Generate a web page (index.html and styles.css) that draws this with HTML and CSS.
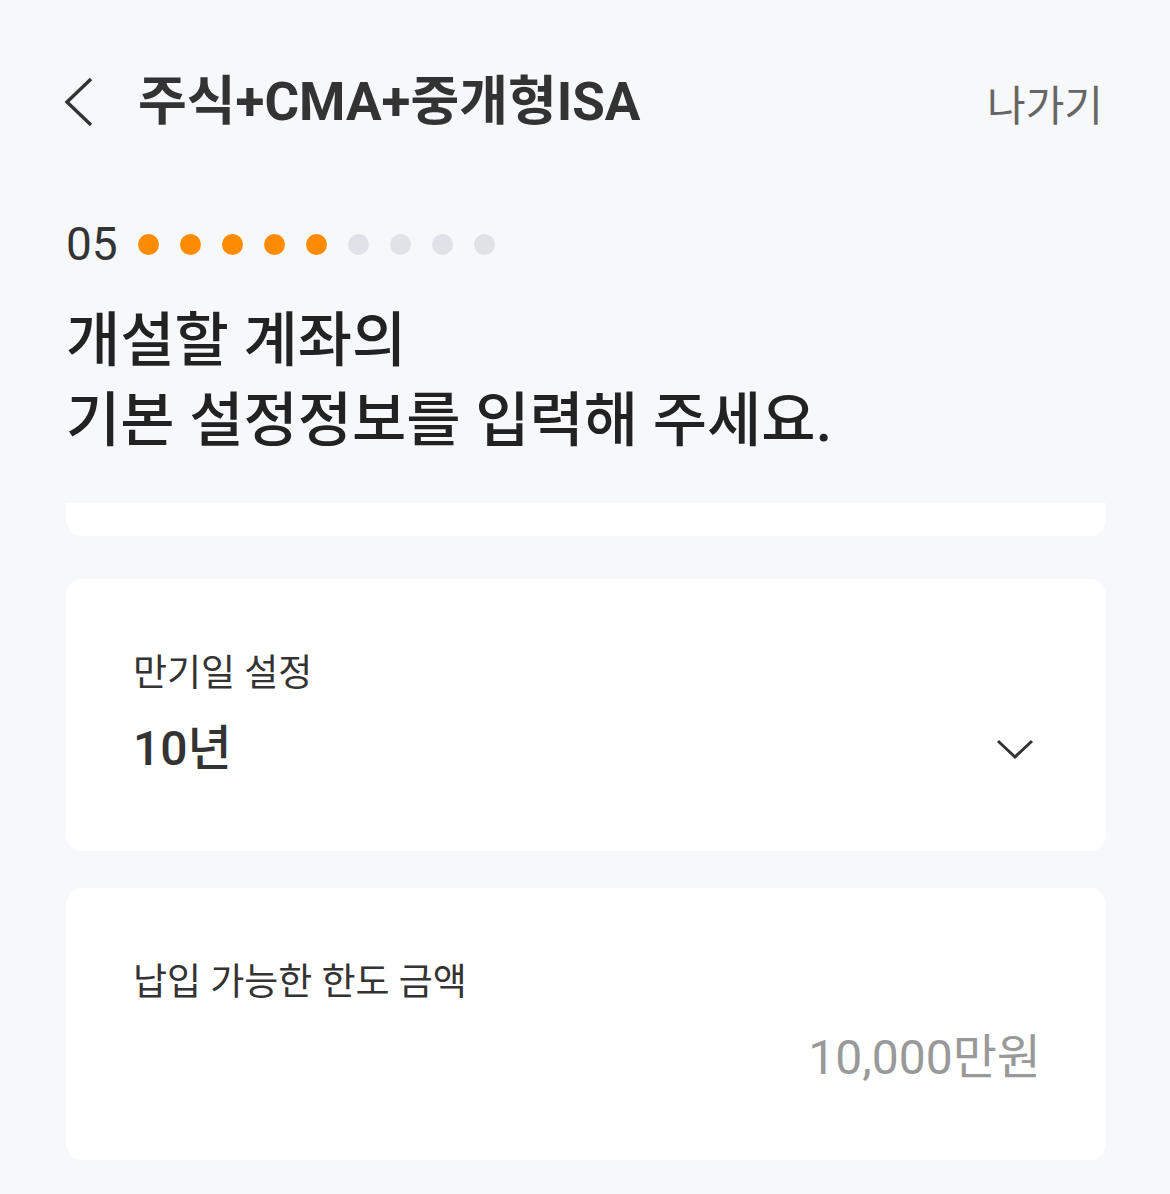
FILE: index.html
```html
<!DOCTYPE html>
<html lang="ko">
<head>
  <meta charset="UTF-8">
  <meta name="viewport" content="width=device-width, initial-scale=1.0">
  <title>주식+CMA+중개형ISA</title>
  <link rel="stylesheet" href="styles.css">
</head>
<body>
  <!-- Top bar -->
  <header class="topbar">
    <div class="topbar-left">
      <a class="back" href="#" aria-label="뒤로">
        <svg width="34" height="50" viewBox="0 0 34 50">
          <path d="M29 3 L5 26 L29 49" fill="none" stroke="#333" stroke-width="3.4" stroke-linejoin="miter"/>
        </svg>
      </a>
      <h1 class="title">주식+CMA+중개형ISA</h1>
    </div>
    <a class="exit" href="#">나가기</a>
  </header>

  <!-- Step + heading -->
  <section class="intro">
    <div class="step">
      <span class="step-num">05</span>
      <div class="dots">
        <span class="dot on"></span>
        <span class="dot on"></span>
        <span class="dot on"></span>
        <span class="dot on"></span>
        <span class="dot on"></span>
        <span class="dot"></span>
        <span class="dot"></span>
        <span class="dot"></span>
        <span class="dot"></span>
      </div>
    </div>
    <h2 class="heading">개설할 계좌의<br>기본 설정정보를 입력해 주세요.</h2>
  </section>

  <!-- Scrolling form -->
  <main class="scroll">
    <div class="card card-hidden"></div>

    <div class="card card-select">
      <div class="label">만기일 설정</div>
      <div class="value-row">
        <span class="value">10년</span>
        <svg class="chevron" width="40" height="24" viewBox="0 0 40 24">
          <path d="M3 4 L20 20 L37 4" fill="none" stroke="#333" stroke-width="3"/>
        </svg>
      </div>
    </div>

    <div class="card card-limit">
      <div class="label">납입 가능한 한도 금액</div>
      <div class="amount">10,000만원</div>
    </div>
  </main>
</body>
</html>
```

FILE: styles.css
```css
body {
  margin: 0;
  padding: 0;
  background-color: #f7f8fa;
  color: #222;
  font-family: Roboto, "Noto Sans CJK KR", sans-serif;
  height: 1194px;
  overflow: hidden;
}

a {
  color: inherit;
  text-decoration: none;
}

/* top bar */
.topbar {
  display: flex;
  justify-content: space-between;
  align-items: center;
  height: 100px;
  margin-top: 52px;
  padding: 0 67px 0 62px;
}

.topbar-left {
  display: flex;
  align-items: center;
}

.back {
  display: flex;
  margin-top: -3px;
}

.title {
  margin: 0 0 0 42px;
  font-size: 53px;
  font-weight: 700;
  line-height: 60px;
  color: #333;
}

.exit {
  font-size: 42px;
  font-weight: 400;
  color: #666;
}

/* intro */
.intro {
  padding: 0 66px;
}

.step {
  display: flex;
  align-items: center;
  height: 50px;
  margin-top: 67px;
}

.step-num {
  font-size: 46px;
  line-height: 50px;
  color: #333;
}

.dots {
  display: flex;
  gap: 21px;
  margin-left: 20px;
}

.dot {
  width: 21px;
  height: 21px;
  border-radius: 50%;
  background-color: #dfe2e6;
}

.dot.on {
  background-color: #ff8c00;
}

.heading {
  margin: 32px 0 0;
  font-size: 59px;
  font-weight: 500;
  line-height: 80px;
  color: #222;
}

/* form area */
.scroll {
  height: 691px;
  margin-top: 42px;
  padding: 0 64px 0 66px;
  overflow: hidden;
}

.card {
  box-sizing: border-box;
  height: 272px;
  background-color: #fff;
  border-radius: 16px;
  padding: 71px 65px 0 67px;
}

.card-hidden {
  margin-top: -239px;
}

.card-select {
  margin-top: 43px;
}

.card-limit {
  margin-top: 37px;
}

.label {
  font-size: 37px;
  line-height: 48px;
  color: #333;
}

.value-row {
  display: flex;
  justify-content: space-between;
  align-items: center;
  margin-top: 21px;
  height: 60px;
}

.value {
  font-size: 48px;
  font-weight: 500;
  line-height: 60px;
  color: #333;
}

.chevron {
  margin-right: 6px;
}

.amount {
  margin-top: 21px;
  text-align: right;
  font-size: 48px;
  line-height: 60px;
  color: #999;
}
```
